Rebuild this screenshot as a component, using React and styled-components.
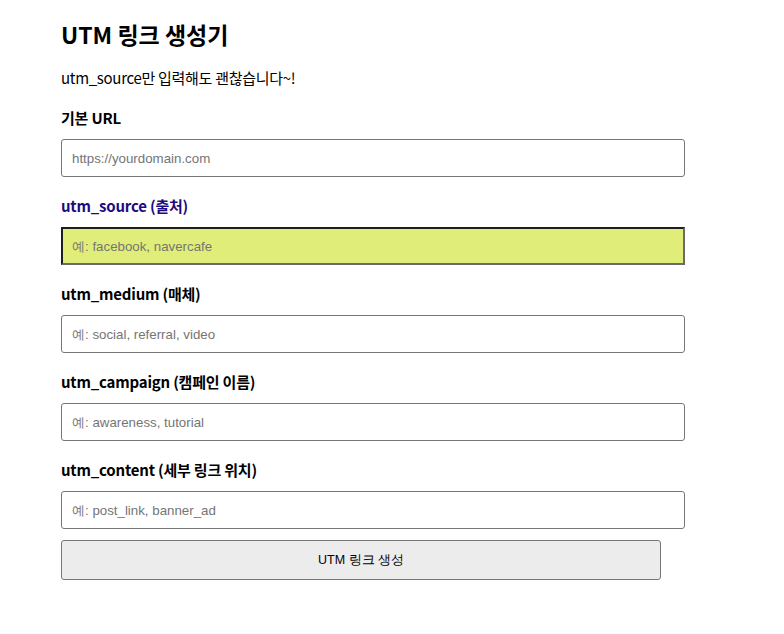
import styled, { createGlobalStyle } from "styled-components";

const GlobalStyle = createGlobalStyle`
  body {
    margin: 0;
    background: #fff;
    font-family: "Noto Sans CJK KR", "Noto Sans", sans-serif;
    color: #000;
  }
`;

const Page = styled.div`
  width: 600px;
  padding: 18px 0 40px 61px;
`;

const Titulo = styled.h1`
  margin: 0;
  font-size: 23px;
  line-height: 32px;
  font-weight: 700;
`;

const Descricao = styled.p`
  margin: 16px 0 0;
  font-size: 15px;
  line-height: 24px;
  letter-spacing: -0.3px;
`;

const Form = styled.form`
  display: flex;
  flex-direction: column;
  margin-top: 17px;
`;

const Campo = styled.div`
  display: flex;
  flex-direction: column;
  margin-bottom: 18px;

  &:last-of-type {
    margin-bottom: 11px;
  }
`;

const Rotulo = styled.label`
  font-size: 15px;
  line-height: 22px;
  font-weight: 700;
  letter-spacing: -0.2px;
  margin-bottom: 10px;
  color: ${(p) => (p.$ativo ? "#1c0b80" : "#000")};
`;

const Entrada = styled.input`
  box-sizing: content-box;
  width: 602px;
  height: 16px;
  padding: 10px;
  margin: 0;
  font-family: "Liberation Sans", Arial, sans-serif;
  font-size: 13.3px;
  border: 1px solid #767676;
  border-radius: 3px;
  background: ${(p) => (p.$ativo ? "#e0ed78" : "#fff")};
  outline: none;

  ${(p) =>
    p.$ativo &&
    `
    padding: 9px;
    border-width: 2px;
    border-color: #1e1e1e #6a6a6a #6a6a6a #1e1e1e;
    border-radius: 0;
  `}

  &::placeholder {
    color: #757575;
  }
`;

const Botao = styled.button`
  width: 600px;
  height: 40px;
  font-family: "Liberation Sans", Arial, sans-serif;
  font-size: 12.5px;
  color: #000;
  background: #ececec;
  border: 1px solid #767676;
  border-radius: 3px;
`;

const campos = [
  { id: "url", rotulo: "기본 URL", placeholder: "https://yourdomain.com" },
  { id: "source", rotulo: "utm_source (출처)", placeholder: "예: facebook, navercafe", ativo: true },
  { id: "medium", rotulo: "utm_medium (매체)", placeholder: "예: social, referral, video" },
  { id: "campaign", rotulo: "utm_campaign (캠페인 이름)", placeholder: "예: awareness, tutorial" },
  { id: "content", rotulo: "utm_content (세부 링크 위치)", placeholder: "예: post_link, banner_ad" },
];

function App() {
  return (
    <>
      <GlobalStyle />
      <Page>
        <Titulo>UTM 링크 생성기</Titulo>
        <Descricao>utm_source만 입력해도 괜찮습니다~!</Descricao>
        <Form onSubmit={(e) => e.preventDefault()}>
          {campos.map((c) => (
            <Campo key={c.id}>
              <Rotulo htmlFor={c.id} $ativo={c.ativo}>
                {c.rotulo}
              </Rotulo>
              <Entrada id={c.id} type="text" placeholder={c.placeholder} $ativo={c.ativo} />
            </Campo>
          ))}
          <Botao type="button">UTM 링크 생성</Botao>
        </Form>
      </Page>
    </>
  );
}

export default App;
